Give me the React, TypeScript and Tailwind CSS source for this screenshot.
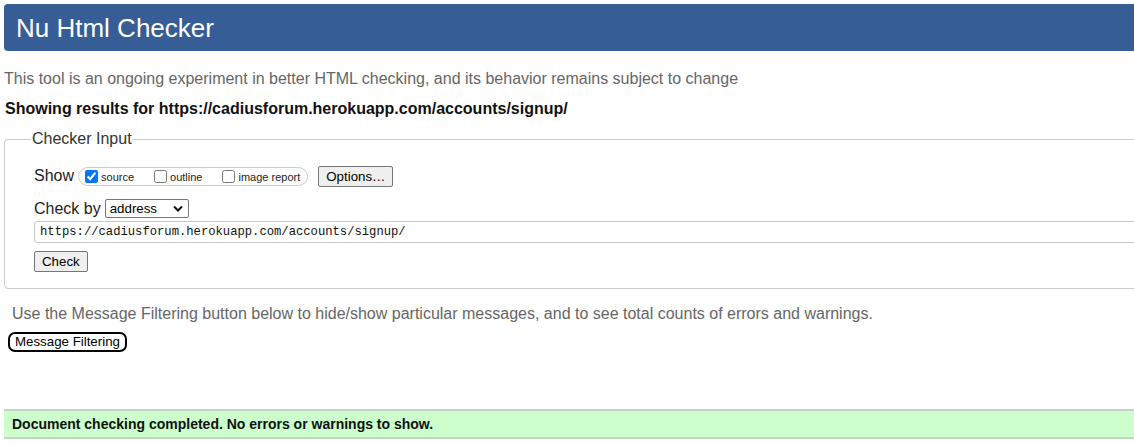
export default function App() {
  return (
    <div className="w-full h-[446px] overflow-hidden bg-white">
      <div className="w-[1160px] pl-1 pt-1 font-['Liberation_Sans',Arial,sans-serif]">
        <header className="h-[47px] rounded-[4px] bg-[#365d95] pl-3 flex items-center">
          <h1 className="text-[26px] leading-none text-white">Nu Html Checker</h1>
        </header>

        <p className="mt-[18px] text-[16px] leading-5 text-[#666666]">
          This tool is an ongoing experiment in better HTML checking, and its behavior remains subject to change
        </p>
        <p className="mt-[10px] pl-px text-[16px] leading-5 font-bold text-[#111111]">
          Showing results for https://cadiusforum.herokuapp.com/accounts/signup/
        </p>

        <fieldset className="mt-[10px] h-[160px] rounded-[4px] border border-[#cccccc] pl-[29px] pr-0">
          <legend className="-ml-[3px] px-px text-[16px] leading-5 text-[#333333]">Checker Input</legend>

          <div className="mt-[15px] flex items-center">
            <span className="text-[16px] text-[#222222]">Show</span>
            <div className="ml-[4px] flex h-[19px] items-center rounded-full border border-[#cccccc] pl-[6px] pr-[7px] text-[11px] text-[#222222]">
              <label className="flex items-center">
                <input type="checkbox" defaultChecked className="m-0 h-[13px] w-[13px] accent-[#0075ff]" />
                <span className="ml-[3px] mt-[2px]">source</span>
              </label>
              <label className="ml-[20px] flex items-center">
                <input type="checkbox" className="m-0 h-[13px] w-[13px]" />
                <span className="ml-[3px] mt-[2px]">outline</span>
              </label>
              <label className="ml-[20px] flex items-center">
                <input type="checkbox" className="m-0 h-[13px] w-[13px]" />
                <span className="ml-[3px] mt-[2px]">image report</span>
              </label>
            </div>
            <button className="ml-[10px] h-[21px] rounded-[2px] border border-[#767676] bg-[#efefef] px-[7px] text-[13.3px] text-black">
              Options…
            </button>
          </div>

          <div className="mt-[11px] flex items-center leading-none">
            <span className="text-[16px] text-[#222222]">Check by</span>
            <div className="ml-[4px] flex h-[19px] w-[84px] items-center justify-between rounded-[2px] border border-[#767676] bg-white pl-[4px] pr-[5px] text-[13.3px] text-black">
              <span>address</span>
              <svg width="10" height="7" viewBox="0 0 10 7" fill="none">
                <path d="M1 1.5 5 5.5 9 1.5" stroke="#111" strokeWidth="2" />
              </svg>
            </div>
          </div>

          <div className="mt-[3px] flex h-[22px] items-center rounded-[4px] border border-r-0 border-[#cccccc] pl-[5px] font-['Liberation_Mono',monospace] text-[12.2px] text-[#111111]">
            https://cadiusforum.herokuapp.com/accounts/signup/
          </div>

          <button className="mt-[8px] block h-[21px] rounded-[2px] border border-[#767676] bg-[#efefef] px-[7px] text-[13.3px] text-black">
            Check
          </button>
        </fieldset>

        <p className="mt-[15px] pl-2 text-[16px] leading-5 text-[#666666]">
          Use the Message Filtering button below to hide/show particular messages, and to see total counts of errors and warnings.
        </p>
        <button className="ml-1 mt-[8px] h-[20px] rounded-[7px] border-2 border-black bg-white px-[5px] text-[13.3px] leading-none text-black">
          Message Filtering
        </button>

        <div className="mt-[56px] flex h-[30px] items-center border-y-2 border-[#c4d4c4] bg-[#ccffcc] pl-2 text-[14px] font-bold text-[#111111]">
          Document checking completed. No errors or warnings to show.
        </div>
      </div>
    </div>
  );
}
